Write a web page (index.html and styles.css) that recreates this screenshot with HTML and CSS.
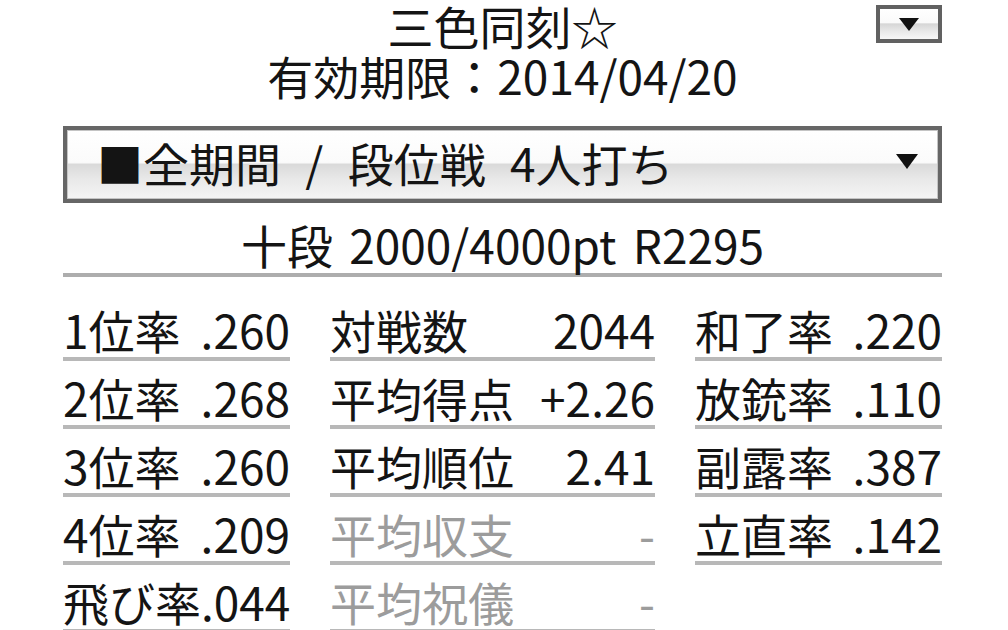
FILE: index.html
```html
<!DOCTYPE html>
<html lang="ja">
<head>
<meta charset="utf-8">
<title>三色同刻☆</title>
<link rel="stylesheet" href="styles.css">
</head>
<body>
<div class="panel">
  <header class="head">
    <div class="head-side"></div>
    <div class="head-main">
      <div class="title">三色同刻☆</div>
      <div class="expiry">有効期限：2014/04/20</div>
    </div>
    <div class="head-side head-side--end">
      <button class="menu-btn" type="button"><span class="tri"></span></button>
    </div>
  </header>

  <div class="select">
    <span class="select-text">■全期間 / 段位戦 4人打ち</span>
    <span class="tri tri--lg"></span>
  </div>

  <div class="rank">十段 2000/4000pt R2295</div>

  <div class="stats">
    <div class="cell"><span>1位率</span><span>.260</span></div>
    <div class="cell"><span>対戦数</span><span>2044</span></div>
    <div class="cell"><span>和了率</span><span>.220</span></div>

    <div class="cell"><span>2位率</span><span>.268</span></div>
    <div class="cell"><span>平均得点</span><span>+2.26</span></div>
    <div class="cell"><span>放銃率</span><span>.110</span></div>

    <div class="cell"><span>3位率</span><span>.260</span></div>
    <div class="cell"><span>平均順位</span><span>2.41</span></div>
    <div class="cell"><span>副露率</span><span>.387</span></div>

    <div class="cell"><span>4位率</span><span>.209</span></div>
    <div class="cell cell--off"><span>平均収支</span><span>-</span></div>
    <div class="cell"><span>立直率</span><span>.142</span></div>

    <div class="cell"><span>飛び率</span><span>.044</span></div>
    <div class="cell cell--off"><span>平均祝儀</span><span>-</span></div>
    <div class="cell cell--empty"></div>
  </div>
</div>
</body>
</html>
```

FILE: styles.css
```css
html, body {
  margin: 0;
  padding: 0;
  background: #ffffff;
}

body {
  font-family: "Noto Sans CJK JP", "Noto Sans", sans-serif;
  font-size: 46px;
  color: #141414;
}

.panel {
  width: 879px;
  margin-left: 63px;
}

/* header: title + expiry centred, small menu button at the right */
.head {
  display: grid;
  grid-template-columns: 1fr auto 1fr;
}

.head-main {
  text-align: center;
  line-height: 50px;
  white-space: nowrap;
}

.head-side--end {
  display: flex;
  justify-content: flex-end;
  align-items: flex-start;
}

.menu-btn {
  margin-top: 5px;
  width: 66px;
  height: 38px;
  padding: 0;
  box-sizing: border-box;
  border: 4px solid #616161;
  background: linear-gradient(#ffffff 0%, #fafafa 45%, #d6d6d6 50%, #e9e9e9 75%, #f7f7f7 100%);
  display: flex;
  align-items: center;
  justify-content: center;
}

.tri {
  display: block;
  width: 0;
  height: 0;
  border-left: 10px solid transparent;
  border-right: 10px solid transparent;
  border-top: 13px solid #111;
}

/* period / mode selector */
.select {
  margin-top: 26px;
  height: 77px;
  box-sizing: border-box;
  border: 4px solid #666666;
  box-shadow: inset 0 0 0 1px #c4c4c4;
  background: linear-gradient(#ffffff 0%, #fbfbfb 47%, #dadada 50%, #e8e8e8 70%, #f5f5f5 100%);
  display: flex;
  align-items: center;
  justify-content: space-between;
  padding: 0 20px 0 30px;
}

.select-text {
  line-height: 48px;
  padding-bottom: 5px;
  word-spacing: 14px;
  white-space: nowrap;
}

.tri--lg {
  border-left-width: 11px;
  border-right-width: 11px;
  border-top-width: 15px;
  margin-top: -6px;
}

/* rank line */
.rank {
  margin-top: 17px;
  line-height: 48px;
  padding-bottom: 5px;
  border-bottom: 4px solid #adadad;
  text-align: center;
  word-spacing: 6px;
  white-space: nowrap;
}

/* stats table */
.stats {
  margin-top: 28px;
  display: grid;
  grid-template-columns: 227px 325px 247px;
  column-gap: 40px;
}

.cell {
  display: flex;
  justify-content: space-between;
  line-height: 48px;
  padding-bottom: 4px;
  border-bottom: 4px solid #b8b8b8;
  margin-bottom: 12px;
  white-space: nowrap;
}

.cell--off {
  color: #9c9c9c;
}

.cell--empty {
  border-bottom-color: transparent;
}
```
